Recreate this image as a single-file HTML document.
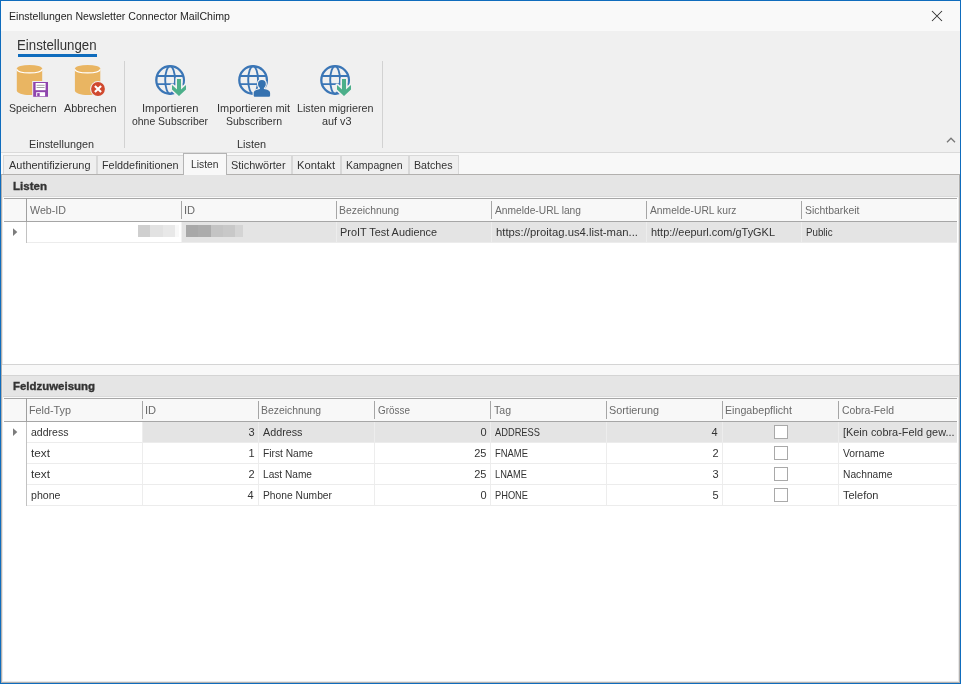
<!DOCTYPE html>
<html lang="de"><head><meta charset="utf-8"><title>Einstellungen Newsletter Connector MailChimp</title>
<style>
html,body{margin:0;padding:0;background:#fff;}
#w{position:relative;width:961px;height:684px;overflow:hidden;font-family:"Liberation Sans", sans-serif;}
#w div,#w svg,#w span{position:absolute;}
#w span{white-space:nowrap;line-height:20px;height:20px;transform-origin:0 0;}
#tx{left:0;top:0;width:961px;height:684px;will-change:transform;}
</style></head><body>
<div id="w">
<div style="left:0px;top:0px;width:961px;height:684px;background:#0f6cbd;"></div>
<div style="left:1px;top:1px;width:959px;height:30px;background:#f9f9f9;"></div>
<div style="left:1px;top:31px;width:959px;height:121px;background:#f0f0f0;"></div>
<div style="left:1px;top:152px;width:959px;height:1px;background:#dadada;"></div>
<div style="left:1px;top:153px;width:959px;height:21px;background:#f8f8f8;"></div>
<div style="left:1px;top:174px;width:959px;height:509px;background:#b2b0ae;"></div>
<div style="left:2px;top:175px;width:957px;height:507px;background:#e8e8e8;"></div>
<div style="left:3px;top:175px;width:955px;height:506px;background:#ffffff;"></div>
<div style="left:18px;top:54px;width:79px;height:3px;background:#0f6cbd;"></div>
<div style="left:124px;top:61px;width:1px;height:87px;background:#d2d2d2;"></div>
<div style="left:382px;top:61px;width:1px;height:87px;background:#d2d2d2;"></div>
<div style="left:3px;top:155px;width:94px;height:19px;background:#d8d8d8;"></div>
<div style="left:4px;top:156px;width:92px;height:18px;background:#efefef;"></div>
<div style="left:97px;top:155px;width:88px;height:19px;background:#d8d8d8;"></div>
<div style="left:98px;top:156px;width:86px;height:18px;background:#efefef;"></div>
<div style="left:225px;top:155px;width:67px;height:19px;background:#d8d8d8;"></div>
<div style="left:226px;top:156px;width:65px;height:18px;background:#efefef;"></div>
<div style="left:292px;top:155px;width:49px;height:19px;background:#d8d8d8;"></div>
<div style="left:293px;top:156px;width:47px;height:18px;background:#efefef;"></div>
<div style="left:341px;top:155px;width:68px;height:19px;background:#d8d8d8;"></div>
<div style="left:342px;top:156px;width:66px;height:18px;background:#efefef;"></div>
<div style="left:409px;top:155px;width:50px;height:19px;background:#d8d8d8;"></div>
<div style="left:410px;top:156px;width:48px;height:18px;background:#efefef;"></div>
<div style="left:183px;top:153px;width:44px;height:22px;background:#b4b4b4;"></div>
<div style="left:184px;top:154px;width:42px;height:21px;background:#f8f8f8;"></div>
<div style="left:3px;top:175px;width:955px;height:21px;background:#e5e5e5;"></div>
<div style="left:3px;top:196px;width:955px;height:1px;background:#dadada;"></div>
<div style="left:3px;top:197px;width:955px;height:1px;background:#fafafa;"></div>
<div style="left:4px;top:198px;width:953px;height:1px;background:#a6a6a6;"></div>
<div style="left:4px;top:199px;width:953px;height:22px;background:#f8f8f8;"></div>
<div style="left:4px;top:221px;width:953px;height:1px;background:#a6a6a6;"></div>
<div style="left:181px;top:201px;width:1px;height:18px;background:#a6a6a6;"></div>
<div style="left:336px;top:201px;width:1px;height:18px;background:#a6a6a6;"></div>
<div style="left:491px;top:201px;width:1px;height:18px;background:#a6a6a6;"></div>
<div style="left:646px;top:201px;width:1px;height:18px;background:#a6a6a6;"></div>
<div style="left:801px;top:201px;width:1px;height:18px;background:#a6a6a6;"></div>
<div style="left:26px;top:198px;width:1px;height:24px;background:#a0a0a0;"></div>
<div style="left:26px;top:222px;width:1px;height:21px;background:#c2c2c2;"></div>
<div style="left:27px;top:222px;width:930px;height:20px;background:#e4e4e4;"></div>
<div style="left:27px;top:222px;width:154px;height:20px;background:#ffffff;"></div>
<div style="left:27px;top:242px;width:930px;height:1px;background:#ececec;"></div>
<div style="left:181px;top:222px;width:1px;height:20px;background:#f2f2f2;"></div>
<div style="left:336px;top:222px;width:1px;height:20px;background:#ededed;"></div>
<div style="left:491px;top:222px;width:1px;height:20px;background:#ededed;"></div>
<div style="left:646px;top:222px;width:1px;height:20px;background:#ededed;"></div>
<div style="left:801px;top:222px;width:1px;height:20px;background:#ededed;"></div>
<svg style="left:13px;top:228px" width="5" height="9" viewBox="0 0 5 9"><path d="M0 0.2L4.3 4.1L0 8Z" fill="#7c7c7c"/></svg>
<div style="left:138px;top:225px;width:12px;height:12px;background:#cfcfcf;"></div>
<div style="left:150px;top:225px;width:13px;height:12px;background:#e2e2e2;"></div>
<div style="left:163px;top:225px;width:12px;height:12px;background:#e8e8e8;"></div>
<div style="left:175px;top:225px;width:4px;height:12px;background:#f8f8f8;"></div>
<div style="left:186px;top:225px;width:12px;height:12px;background:#a8a8a8;"></div>
<div style="left:198px;top:225px;width:13px;height:12px;background:#acacac;"></div>
<div style="left:211px;top:225px;width:12px;height:12px;background:#c4c4c4;"></div>
<div style="left:223px;top:225px;width:12px;height:12px;background:#c8c8c8;"></div>
<div style="left:235px;top:225px;width:8px;height:12px;background:#d4d4d4;"></div>
<div style="left:2px;top:364px;width:957px;height:1px;background:#d4d4d4;"></div>
<div style="left:2px;top:365px;width:957px;height:10px;background:#f8f8f8;"></div>
<div style="left:2px;top:375px;width:957px;height:1px;background:#d4d4d4;"></div>
<div style="left:3px;top:376px;width:955px;height:20px;background:#e5e5e5;"></div>
<div style="left:3px;top:396px;width:955px;height:1px;background:#dadada;"></div>
<div style="left:3px;top:397px;width:955px;height:1px;background:#fafafa;"></div>
<div style="left:4px;top:398px;width:953px;height:1px;background:#a6a6a6;"></div>
<div style="left:4px;top:399px;width:953px;height:22px;background:#f8f8f8;"></div>
<div style="left:4px;top:421px;width:953px;height:1px;background:#a6a6a6;"></div>
<div style="left:142px;top:401px;width:1px;height:18px;background:#a6a6a6;"></div>
<div style="left:258px;top:401px;width:1px;height:18px;background:#a6a6a6;"></div>
<div style="left:374px;top:401px;width:1px;height:18px;background:#a6a6a6;"></div>
<div style="left:490px;top:401px;width:1px;height:18px;background:#a6a6a6;"></div>
<div style="left:606px;top:401px;width:1px;height:18px;background:#a6a6a6;"></div>
<div style="left:722px;top:401px;width:1px;height:18px;background:#a6a6a6;"></div>
<div style="left:838px;top:401px;width:1px;height:18px;background:#a6a6a6;"></div>
<div style="left:26px;top:398px;width:1px;height:24px;background:#a0a0a0;"></div>
<div style="left:26px;top:422px;width:1px;height:84px;background:#c2c2c2;"></div>
<div style="left:27px;top:422px;width:930px;height:20px;background:#e4e4e4;"></div>
<div style="left:27px;top:422px;width:115px;height:20px;background:#ffffff;"></div>
<div style="left:27px;top:442px;width:930px;height:1px;background:#ececec;"></div>
<div style="left:142px;top:422px;width:1px;height:20px;background:#ededed;"></div>
<div style="left:258px;top:422px;width:1px;height:20px;background:#ededed;"></div>
<div style="left:374px;top:422px;width:1px;height:20px;background:#ededed;"></div>
<div style="left:490px;top:422px;width:1px;height:20px;background:#ededed;"></div>
<div style="left:606px;top:422px;width:1px;height:20px;background:#ededed;"></div>
<div style="left:722px;top:422px;width:1px;height:20px;background:#ededed;"></div>
<div style="left:838px;top:422px;width:1px;height:20px;background:#ededed;"></div>
<div style="left:774px;top:425px;width:14px;height:14px;background:#a9a9a9;"></div>
<div style="left:775px;top:426px;width:12px;height:12px;background:#ffffff;"></div>
<div style="left:27px;top:463px;width:930px;height:1px;background:#ececec;"></div>
<div style="left:142px;top:443px;width:1px;height:20px;background:#ededed;"></div>
<div style="left:258px;top:443px;width:1px;height:20px;background:#ededed;"></div>
<div style="left:374px;top:443px;width:1px;height:20px;background:#ededed;"></div>
<div style="left:490px;top:443px;width:1px;height:20px;background:#ededed;"></div>
<div style="left:606px;top:443px;width:1px;height:20px;background:#ededed;"></div>
<div style="left:722px;top:443px;width:1px;height:20px;background:#ededed;"></div>
<div style="left:838px;top:443px;width:1px;height:20px;background:#ededed;"></div>
<div style="left:774px;top:446px;width:14px;height:14px;background:#a9a9a9;"></div>
<div style="left:775px;top:447px;width:12px;height:12px;background:#ffffff;"></div>
<div style="left:27px;top:484px;width:930px;height:1px;background:#ececec;"></div>
<div style="left:142px;top:464px;width:1px;height:20px;background:#ededed;"></div>
<div style="left:258px;top:464px;width:1px;height:20px;background:#ededed;"></div>
<div style="left:374px;top:464px;width:1px;height:20px;background:#ededed;"></div>
<div style="left:490px;top:464px;width:1px;height:20px;background:#ededed;"></div>
<div style="left:606px;top:464px;width:1px;height:20px;background:#ededed;"></div>
<div style="left:722px;top:464px;width:1px;height:20px;background:#ededed;"></div>
<div style="left:838px;top:464px;width:1px;height:20px;background:#ededed;"></div>
<div style="left:774px;top:467px;width:14px;height:14px;background:#a9a9a9;"></div>
<div style="left:775px;top:468px;width:12px;height:12px;background:#ffffff;"></div>
<div style="left:27px;top:505px;width:930px;height:1px;background:#ececec;"></div>
<div style="left:142px;top:485px;width:1px;height:20px;background:#ededed;"></div>
<div style="left:258px;top:485px;width:1px;height:20px;background:#ededed;"></div>
<div style="left:374px;top:485px;width:1px;height:20px;background:#ededed;"></div>
<div style="left:490px;top:485px;width:1px;height:20px;background:#ededed;"></div>
<div style="left:606px;top:485px;width:1px;height:20px;background:#ededed;"></div>
<div style="left:722px;top:485px;width:1px;height:20px;background:#ededed;"></div>
<div style="left:838px;top:485px;width:1px;height:20px;background:#ededed;"></div>
<div style="left:774px;top:488px;width:14px;height:14px;background:#a9a9a9;"></div>
<div style="left:775px;top:489px;width:12px;height:12px;background:#ffffff;"></div>
<svg style="left:13px;top:428px" width="5" height="9" viewBox="0 0 5 9"><path d="M0 0.2L4.3 4.1L0 8Z" fill="#7c7c7c"/></svg>
<svg style="left:931px;top:10px" width="12" height="12" viewBox="0 0 12 12"><path d="M1 1L11 11M11 1L1 11" stroke="#303030" stroke-width="1.05" fill="none"/></svg>
<svg style="left:946px;top:136px" width="10" height="8" viewBox="0 0 10 8"><path d="M1 6.2L5 2.2L9 6.2" stroke="#777" stroke-width="1.3" fill="none"/></svg>
<svg style="left:0;top:60px" width="400" height="40" viewBox="0 60 400 40">
<defs>
<g id="cyl"><path d="M0 3.8V25.4C0 27.9 5.7 30 12.7 30S25.4 27.9 25.4 25.4V3.8Z" fill="#e9b562"/><ellipse cx="12.7" cy="3.8" rx="12.7" ry="3.8" fill="#e9b562"/><path d="M0 4.3C0.5 6.4 5.9 7.9 12.7 7.9S24.9 6.4 25.4 4.3" fill="none" stroke="#fff" stroke-width="1.3"/></g>
<g id="globe" fill="none" stroke="#3b76b6" stroke-width="2.3"><circle cx="0" cy="0" r="13.8"/><ellipse cx="0" cy="0" rx="4.9" ry="13.8" stroke-width="1.9"/><path d="M-13 -4H13M-13 4.1H13" stroke-width="1.9"/></g>
<path id="arr" d="M-2 -8.6H2V2L7 -2.5V1.9L0 8.6L-7 1.9V-2.5L-2 2Z"/>
</defs>
<!-- Speichern -->
<use href="#cyl" x="16.8" y="65"/>
<rect x="32.2" y="81" width="16.8" height="16.8" fill="#f0f0f0"/>
<rect x="33.2" y="82" width="14.8" height="14.8" fill="#8e45ad"/>
<rect x="35.6" y="83" width="10" height="7.2" fill="#fff"/>
<path d="M36.6 85.3H44.6M36.6 87.5H44.6" stroke="#9a9a9a" stroke-width="0.9"/>
<rect x="36.2" y="92.2" width="8.9" height="4" fill="#fff"/>
<rect x="37.2" y="93.1" width="2.5" height="3.1" fill="#8e45ad"/>
<!-- Abbrechen -->
<use href="#cyl" x="74.9" y="65"/>
<circle cx="98" cy="89" r="7.9" fill="#f0f0f0"/>
<circle cx="98" cy="89" r="6.9" fill="#d0492f"/>
<path d="M94.9 85.9L101.1 92.1M101.1 85.9L94.9 92.1" stroke="#fff" stroke-width="2.1" fill="none"/>
<!-- Importieren ohne Subscriber -->
<use href="#globe" x="170.1" y="80"/>
<use href="#arr" x="179" y="87.5" fill="#f0f0f0" stroke="#f0f0f0" stroke-width="3.2" stroke-linejoin="round"/>
<use href="#arr" x="179" y="87.5" fill="#4caf8a"/>
<!-- Importieren mit Subscribern -->
<use href="#globe" x="253.1" y="80"/>
<g id="person"><path d="M261.9 80.1c2.5 0 3.9 1.6 3.9 3.8 0 1.7-0.8 3.1-1.9 3.9v1.2c3 0.6 6.2 1.5 6.2 3.9v2.5c0 0.8-0.6 1.4-1.4 1.4h-13.6c-0.8 0-1.4-0.6-1.4-1.4v-2.5c0-2.4 3.2-3.3 6.2-3.9v-1.2c-1.1-0.8-1.9-2.2-1.9-3.9 0-2.2 1.4-3.8 3.9-3.8z" fill="#f0f0f0" stroke="#f0f0f0" stroke-width="2.2" stroke-linejoin="round"/><path d="M261.9 80.1c2.5 0 3.9 1.6 3.9 3.8 0 1.7-0.8 3.1-1.9 3.9v1.2c3 0.6 6.2 1.5 6.2 3.9v2.5c0 0.8-0.6 1.4-1.4 1.4h-13.6c-0.8 0-1.4-0.6-1.4-1.4v-2.5c0-2.4 3.2-3.3 6.2-3.9v-1.2c-1.1-0.8-1.9-2.2-1.9-3.9 0-2.2 1.4-3.8 3.9-3.8z" fill="#3572b0"/></g>
<!-- Listen migrieren -->
<use href="#globe" x="335.1" y="80"/>
<use href="#arr" x="344" y="87.5" fill="#f0f0f0" stroke="#f0f0f0" stroke-width="3.2" stroke-linejoin="round"/>
<use href="#arr" x="344" y="87.5" fill="#4caf8a"/>
</svg>

<div id="tx">
<span id="t0" style="top:6px;font-size:11px;color:#1e1e1e;left:9px;transform:scaleX(0.9613);">Einstellungen Newsletter Connector MailChimp</span>
<span id="t1" style="top:35px;font-size:14px;color:#333;left:17px;transform:scaleX(0.9460);">Einstellungen</span>
<span id="t2" style="top:98px;font-size:11px;color:#333333;left:9px;transform:scaleX(0.9589);">Speichern</span>
<span id="t3" style="top:98px;font-size:11px;color:#333333;left:64px;transform:scaleX(0.9867);">Abbrechen</span>
<span id="t4" style="top:134px;font-size:11px;color:#333333;left:28.5px;transform:scaleX(0.9844);">Einstellungen</span>
<span id="t5" style="top:98px;font-size:11px;color:#333333;left:142px;transform:scaleX(1.0159);">Importieren</span>
<span id="t6" style="top:111px;font-size:11px;color:#333333;left:131.5px;transform:scaleX(0.9487);">ohne Subscriber</span>
<span id="t7" style="top:98px;font-size:11px;color:#333333;left:217px;transform:scaleX(0.9953);">Importieren mit</span>
<span id="t8" style="top:111px;font-size:11px;color:#333333;left:225.5px;transform:scaleX(0.9540);">Subscribern</span>
<span id="t9" style="top:98px;font-size:11px;color:#333333;left:296.5px;transform:scaleX(0.9780);">Listen migrieren</span>
<span id="t10" style="top:111px;font-size:11px;color:#333333;left:321.5px;transform:scaleX(0.9844);">auf v3</span>
<span id="t11" style="top:134px;font-size:11px;color:#333333;left:236.5px;transform:scaleX(0.9890);">Listen</span>
<span id="t12" style="top:155px;font-size:11px;color:#333333;left:9px;transform:scaleX(0.9945);">Authentifizierung</span>
<span id="t13" style="top:155px;font-size:11px;color:#333333;left:102px;transform:scaleX(0.9852);">Felddefinitionen</span>
<span id="t14" style="top:155px;font-size:11px;color:#333333;left:231px;transform:scaleX(0.9907);">Stichwörter</span>
<span id="t15" style="top:155px;font-size:11px;color:#333333;left:297px;transform:scaleX(1.0192);">Kontakt</span>
<span id="t16" style="top:155px;font-size:11px;color:#333333;left:346px;transform:scaleX(0.9528);">Kampagnen</span>
<span id="t17" style="top:155px;font-size:11px;color:#333333;left:414px;transform:scaleX(0.9696);">Batches</span>
<span id="t18" style="top:154px;font-size:11px;color:#333333;left:191px;transform:scaleX(0.9367);">Listen</span>
<span id="t19" style="top:176px;font-size:11px;color:#333333;font-weight:700;-webkit-text-stroke:0.35px #333;left:13px;transform:scaleX(1.0492);">Listen</span>
<span id="t20" style="top:200px;font-size:11px;color:#6a6a6a;left:30px;transform:scaleX(0.9705);">Web-ID</span>
<span id="t21" style="top:200px;font-size:11px;color:#6a6a6a;left:184px;transform:scaleX(1.0101);">ID</span>
<span id="t22" style="top:200px;font-size:11px;color:#6a6a6a;left:339px;transform:scaleX(0.9435);">Bezeichnung</span>
<span id="t23" style="top:200px;font-size:11px;color:#6a6a6a;left:495px;transform:scaleX(0.9294);">Anmelde-URL lang</span>
<span id="t24" style="top:200px;font-size:11px;color:#6a6a6a;left:650px;transform:scaleX(0.9350);">Anmelde-URL kurz</span>
<span id="t25" style="top:200px;font-size:11px;color:#6a6a6a;left:805px;transform:scaleX(0.9481);">Sichtbarkeit</span>
<span id="t26" style="top:222px;font-size:11px;color:#333333;left:340px;transform:scaleX(0.9894);">ProIT Test Audience</span>
<span id="t27" style="top:222px;font-size:11px;color:#333333;left:496px;transform:scaleX(1.0278);">https://proitag.us4.list-man...</span>
<span id="t28" style="top:222px;font-size:11px;color:#333333;left:651px;transform:scaleX(0.9941);">http://eepurl.com/gTyGKL</span>
<span id="t29" style="top:222px;font-size:11px;color:#333333;left:806px;transform:scaleX(0.8856);">Public</span>
<span id="t30" style="top:376px;font-size:11px;color:#333333;font-weight:700;-webkit-text-stroke:0.35px #333;left:13px;transform:scaleX(1.0400);">Feldzuweisung</span>
<span id="t31" style="top:400px;font-size:11px;color:#6a6a6a;left:29px;transform:scaleX(0.9820);">Feld-Typ</span>
<span id="t32" style="top:400px;font-size:11px;color:#6a6a6a;left:145px;transform:scaleX(1.0101);">ID</span>
<span id="t33" style="top:400px;font-size:11px;color:#6a6a6a;left:261px;transform:scaleX(0.9435);">Bezeichnung</span>
<span id="t34" style="top:400px;font-size:11px;color:#6a6a6a;left:378px;transform:scaleX(0.9022);">Grösse</span>
<span id="t35" style="top:400px;font-size:11px;color:#6a6a6a;left:494px;transform:scaleX(0.9577);">Tag</span>
<span id="t36" style="top:400px;font-size:11px;color:#6a6a6a;left:609px;transform:scaleX(0.9853);">Sortierung</span>
<span id="t37" style="top:400px;font-size:11px;color:#6a6a6a;left:725px;transform:scaleX(0.9697);">Eingabepflicht</span>
<span id="t38" style="top:400px;font-size:11px;color:#6a6a6a;left:842px;transform:scaleX(0.9449);">Cobra-Feld</span>
<span id="t39" style="top:422px;font-size:11px;color:#333333;left:31px;transform:scaleX(0.9581);">address</span>
<span id="t40" style="top:422px;font-size:11px;color:#333333;right:706.5px;">3</span>
<span id="t41" style="top:422px;font-size:11px;color:#333333;left:263px;transform:scaleX(0.9790);">Address</span>
<span id="t42" style="top:422px;font-size:11px;color:#333333;right:474.5px;">0</span>
<span id="t43" style="top:422px;font-size:11px;color:#333333;left:495px;transform:scaleX(0.8461);">ADDRESS</span>
<span id="t44" style="top:422px;font-size:11px;color:#333333;right:243.5px;">4</span>
<span id="t45" style="top:422px;font-size:11px;color:#333333;left:843px;transform:scaleX(0.9910);">[Kein cobra-Feld gew...</span>
<span id="t46" style="top:443px;font-size:11px;color:#333333;left:31px;transform:scaleX(1.0714);">text</span>
<span id="t47" style="top:443px;font-size:11px;color:#333333;right:706.5px;">1</span>
<span id="t48" style="top:443px;font-size:11px;color:#333333;left:263px;transform:scaleX(0.9297);">First Name</span>
<span id="t49" style="top:443px;font-size:11px;color:#333333;right:474.5px;">25</span>
<span id="t50" style="top:443px;font-size:11px;color:#333333;left:495px;transform:scaleX(0.8571);">FNAME</span>
<span id="t51" style="top:443px;font-size:11px;color:#333333;right:242.5px;">2</span>
<span id="t52" style="top:443px;font-size:11px;color:#333333;left:843px;transform:scaleX(0.9425);">Vorname</span>
<span id="t53" style="top:464px;font-size:11px;color:#333333;left:31px;transform:scaleX(1.0714);">text</span>
<span id="t54" style="top:464px;font-size:11px;color:#333333;right:706.5px;">2</span>
<span id="t55" style="top:464px;font-size:11px;color:#333333;left:263px;transform:scaleX(0.9210);">Last Name</span>
<span id="t56" style="top:464px;font-size:11px;color:#333333;right:474.5px;">25</span>
<span id="t57" style="top:464px;font-size:11px;color:#333333;left:495px;transform:scaleX(0.8442);">LNAME</span>
<span id="t58" style="top:464px;font-size:11px;color:#333333;right:242.5px;">3</span>
<span id="t59" style="top:464px;font-size:11px;color:#333333;left:843px;transform:scaleX(0.9304);">Nachname</span>
<span id="t60" style="top:485px;font-size:11px;color:#333333;left:31px;transform:scaleX(0.9642);">phone</span>
<span id="t61" style="top:485px;font-size:11px;color:#333333;right:707.5px;">4</span>
<span id="t62" style="top:485px;font-size:11px;color:#333333;left:263px;transform:scaleX(0.9324);">Phone Number</span>
<span id="t63" style="top:485px;font-size:11px;color:#333333;right:474.5px;">0</span>
<span id="t64" style="top:485px;font-size:11px;color:#333333;left:495px;transform:scaleX(0.8435);">PHONE</span>
<span id="t65" style="top:485px;font-size:11px;color:#333333;right:242.5px;">5</span>
<span id="t66" style="top:485px;font-size:11px;color:#333333;left:843px;transform:scaleX(1.0004);">Telefon</span>
</div>
</div>
</body></html>
